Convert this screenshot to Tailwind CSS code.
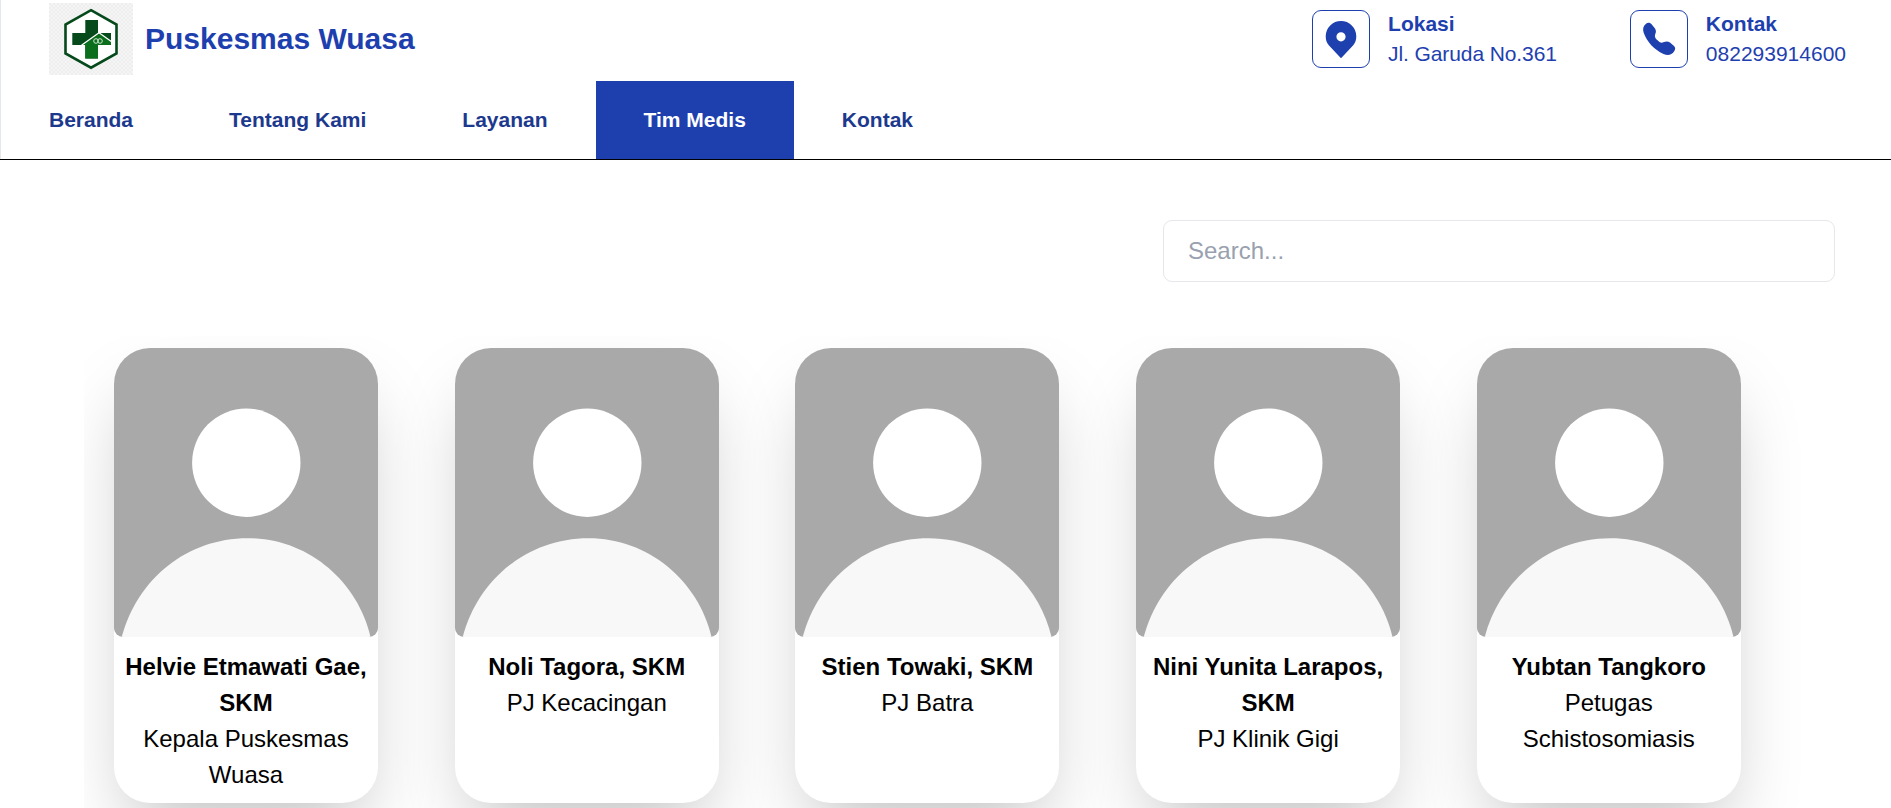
<!DOCTYPE html>
<html lang="id">
<head>
<meta charset="utf-8">
<title>Puskesmas Wuasa</title>
<script src="https://cdn.jsdelivr.net/npm/@tailwindcss/browser@4"></script>
</head>
<body class="h-[808px] overflow-hidden bg-white font-['Liberation_Sans',Arial,sans-serif] text-2xl leading-9 text-black">
<svg class="hidden">
  <symbol id="avatar" viewBox="0 0 264 289">
    <rect width="264" height="289" fill="#a9a9a9"/>
    <circle cx="132.3" cy="114.7" r="54.2" fill="#fff"/>
    <path d="M7.700 289C23 231 73 190.200 133.500 190.200 193 190.200 243 232 256.500 289Z" fill="#f8f8f8"/>
  </symbol>
</svg>
<header class="h-40 border-b border-black">
  <div class="flex h-[159px] flex-col border-l border-gray-200">
    <div class="flex h-[81px] items-start justify-between pl-12 pr-[45px]">
      <div class="flex items-center gap-3 pt-[3px]">
        <svg class="h-[72px] w-[84px]" viewBox="0 0 84 72">
          <defs><pattern id="dots" width="4" height="4" patternUnits="userSpaceOnUse"><rect width="4" height="4" fill="#f5f5f5"/><rect width="2" height="2" fill="#eeeeee"/><rect x="2" y="2" width="2" height="2" fill="#eeeeee"/></pattern></defs>
          <rect width="84" height="72" fill="url(#dots)"/>
          <path d="M42 7.200 67.500 21.500V50.500L42 64.700 16.500 50.500V21.500Z" fill="#fff" stroke="#064a1c" stroke-width="2.600"/>
          <path d="M36.300 17H49V30H62V42H49V55.500H36.300V42H23.300V30H36.300Z" fill="#064a1c"/>
          <path d="M33 42 50 30 62 38.500V42H49V55.500H36.300V42Z" fill="#0a6e1c"/>
          <path d="M32.500 42.300 50 29.800 63 39" fill="none" stroke="#fff" stroke-width="1.300"/>
          <circle cx="47" cy="38" r="2.300" fill="none" stroke="#cfe3d0"/><circle cx="51" cy="38" r="2.300" fill="none" stroke="#cfe3d0"/>
        </svg>
        <h1 class="text-[30px] font-bold text-[#1e40af]">Puskesmas Wuasa</h1>
      </div>
      <div class="flex gap-[73px] pt-[9px] text-[21px] leading-[30px] text-[#1e40af]">
        <div class="flex items-center gap-[18px]">
          <div class="flex size-[58px] items-center justify-center rounded-[9px] border border-[#1e40af]">
            <svg class="size-[58px] shrink-0" viewBox="0 0 58 58" fill="#1e40af"><path fill-rule="evenodd" d="M29 11A15.300 15.300 0 0 0 13.700 26.200C13.700 30 14.800 33 17 35.600L29 48.300 41 35.600C43.200 33 44.300 30 44.300 26.200A15.300 15.300 0 0 0 29 11Zm0 11.200a4.600 4.600 0 1 1 0 9.200 4.600 4.600 0 0 1 0-9.200Z"/></svg>
          </div>
          <div><p class="font-bold">Lokasi</p><p class="tracking-[-0.1px]">Jl. Garuda No.361</p></div>
        </div>
        <div class="flex items-center gap-[18px]">
          <div class="flex size-[58px] items-center justify-center rounded-[9px] border border-[#1e40af]">
            <svg class="size-[58px] shrink-0" viewBox="0 0 58 58" fill="#1e40af"><path d="M16 13.700C18 12.300 20.300 12.600 21.800 14.500L25 18.500C26.200 20.500 26.200 22.200 25.200 24.200 24.600 25.800 24.900 27.300 26.300 29.200L29.500 32C31 33 32.300 32.800 34 32 36.300 31 38.300 31.300 40 32.600L44 36C45.600 37.600 45.500 39.300 44.200 41.300 41.500 45.300 37.800 45.800 33.500 44 24 39.500 17 32 13.600 22.500 12.500 19 13.300 15.800 16 13.700Z"/></svg>
          </div>
          <div><p class="font-bold">Kontak</p><p>082293914600</p></div>
        </div>
      </div>
    </div>
    <nav class="flex h-[78px] text-[21px] font-bold text-blue-900">
      <a class="flex items-center px-12">Beranda</a>
      <a class="flex items-center px-12">Tentang Kami</a>
      <a class="flex items-center px-12">Layanan</a>
      <a class="flex items-center bg-[#1e40af] px-12 text-white">Tim Medis</a>
      <a class="flex items-center px-12">Kontak</a>
    </nav>
  </div>
</header>
<main>
  <div class="flex justify-end pr-14 pt-[60px]">
    <input placeholder="Search..." class="h-[62px] w-[672px] rounded-[9px] border border-gray-200 px-6 placeholder:text-gray-400">
  </div>
  <section class="ml-[84px] mt-[54px] flex h-[472px] gap-[76.7px] overflow-hidden pl-[30px] pt-3 text-center">
    <article class="h-[455px] w-[264px] shrink-0 rounded-[36px] bg-white shadow-[0_37.5px_75px_-18px_rgba(0,0,0,0.25)]">
      <svg class="h-[289px] w-[264px] rounded-b-[9px] rounded-t-[36px]"><use href="#avatar"/></svg>
      <div class="px-2 pt-3"><h2 class="font-bold">Helvie Etmawati Gae, SKM</h2><p>Kepala Puskesmas Wuasa</p></div>
    </article>
    <article class="h-[455px] w-[264px] shrink-0 rounded-[36px] bg-white shadow-[0_37.5px_75px_-18px_rgba(0,0,0,0.25)]">
      <svg class="h-[289px] w-[264px] rounded-b-[9px] rounded-t-[36px]"><use href="#avatar"/></svg>
      <div class="px-2 pt-3"><h2 class="font-bold">Noli Tagora, SKM</h2><p>PJ Kecacingan</p></div>
    </article>
    <article class="h-[455px] w-[264px] shrink-0 rounded-[36px] bg-white shadow-[0_37.5px_75px_-18px_rgba(0,0,0,0.25)]">
      <svg class="h-[289px] w-[264px] rounded-b-[9px] rounded-t-[36px]"><use href="#avatar"/></svg>
      <div class="px-2 pt-3"><h2 class="font-bold">Stien Towaki, SKM</h2><p>PJ Batra</p></div>
    </article>
    <article class="h-[455px] w-[264px] shrink-0 rounded-[36px] bg-white shadow-[0_37.5px_75px_-18px_rgba(0,0,0,0.25)]">
      <svg class="h-[289px] w-[264px] rounded-b-[9px] rounded-t-[36px]"><use href="#avatar"/></svg>
      <div class="px-2 pt-3"><h2 class="font-bold">Nini Yunita Larapos, SKM</h2><p>PJ Klinik Gigi</p></div>
    </article>
    <article class="h-[455px] w-[264px] shrink-0 rounded-[36px] bg-white shadow-[0_37.5px_75px_-18px_rgba(0,0,0,0.25)]">
      <svg class="h-[289px] w-[264px] rounded-b-[9px] rounded-t-[36px]"><use href="#avatar"/></svg>
      <div class="px-2 pt-3"><h2 class="font-bold">Yubtan Tangkoro</h2><p>Petugas Schistosomiasis</p></div>
    </article>
  </section>
</main>
</body>
</html>
